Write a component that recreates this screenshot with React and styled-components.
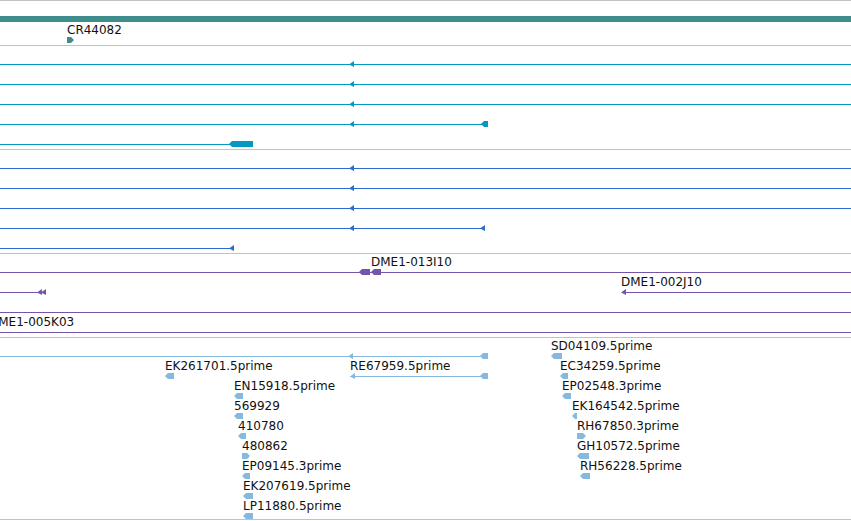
import React from "react";
import styled, { createGlobalStyle } from "styled-components";

const GlobalStyle = createGlobalStyle`
  html, body { margin: 0; padding: 0; background: #ffffff; overflow: hidden; }
  #root { width: 851px; }
`;

const Browser = styled.div`
  width: 851px;
  border-top: 1px solid #c2c2c2;
  background: #ffffff;
`;

const Track = styled.div`
  position: relative;
  height: ${(p) => p.$h}px;
  border-bottom: 1px solid #c2c2c2;
  overflow: hidden;
  color: ${(p) => p.$color};
`;

const Feature = styled.div.attrs((p) => ({
  style: { left: `${p.$x}px`, top: `${p.$top}px`, width: `${p.$w}px` },
}))`
  position: absolute;
  display: flex;
  flex-direction: column;
  align-items: flex-start;
`;

const Label = styled.div`
  height: 14px;
  line-height: 16px;
  font-family: "DejaVu Sans", "Liberation Sans", sans-serif;
  font-size: 12px;
  color: #111111;
  white-space: nowrap;
`;

const GlyphSvg = styled.svg`
  display: block;
  margin-top: 1px;
  overflow: visible;
  fill: currentColor;
`;

const FULL_A = -12;
const FULL_B = 861;

function shape(p, x0, key) {
  if (p.t === "line") {
    return <rect key={key} x={p.a - x0} y={3} width={p.b - p.a} height={1} shapeRendering="crispEdges" />;
  }
  if (p.t === "arrow") {
    const a = p.x - x0;
    const pts =
      p.dir === "R"
        ? `${a + 5},3.5 ${a},0 ${a},6`
        : `${a},3.5 ${a + 5},0 ${a + 5},6`;
    return <polygon key={key} points={pts} />;
  }
  const a = p.a - x0;
  const b = p.b - x0;
  let pts;
  if (p.dir === "L") pts = `${a},3 ${a + 3},0 ${b},0 ${b},6 ${a + 3},6`;
  else if (p.dir === "R") pts = `${a},0 ${b - 3},0 ${b},3 ${b - 3},6 ${a},6`;
  else pts = `${a},0 ${b},0 ${b},6 ${a},6`;
  return <polygon key={key} points={pts} />;
}

function FeatureGlyph({ f }) {
  const xs = f.parts.flatMap((p) => (p.t === "arrow" ? [p.x, p.x + 5] : [p.a, p.b]));
  const x0 = Math.min(...xs);
  const x1 = Math.max(...xs);
  const w = x1 - x0;
  return (
    <Feature $x={x0} $top={f.y - 18} $w={w}>
      <Label>{f.label || ""}</Label>
      <GlyphSvg width={w} height={6} viewBox={`0 0 ${w} 6`}>
        {f.parts.map((p, i) => shape(p, x0, i))}
      </GlyphSvg>
    </Feature>
  );
}

const line = (a, b) => ({ t: "line", a, b });
const arrow = (x, dir = "L") => ({ t: "arrow", x, dir });
const box = (a, b, dir = "L") => ({ t: "box", a, b, dir });

const fullArrowRow = (y) => ({ y, parts: [line(FULL_A, FULL_B), arrow(349)] });

const tracks = [
  {
    id: "t1",
    h: 44,
    color: "#3f8d8d",
    features: [
      { y: 18, parts: [box(FULL_A, FULL_B, null)] },
      { y: 39, label: "CR44082", parts: [box(67, 74, "R")] },
    ],
  },
  {
    id: "t2",
    h: 103,
    color: "#0499c2",
    features: [
      fullArrowRow(18),
      fullArrowRow(38),
      fullArrowRow(58),
      { y: 78, parts: [line(FULL_A, 484), arrow(349), box(481, 488)] },
      { y: 98, parts: [line(FULL_A, 232), box(229, 253)] },
    ],
  },
  {
    id: "t3",
    h: 103,
    color: "#2b6cd0",
    features: [
      fullArrowRow(18),
      fullArrowRow(38),
      fullArrowRow(58),
      { y: 78, parts: [line(FULL_A, 484), arrow(349), arrow(480)] },
      { y: 98, parts: [line(FULL_A, 232), arrow(229)] },
    ],
  },
  {
    id: "t4",
    h: 83,
    color: "#7655a9",
    features: [
      { y: 18, parts: [line(FULL_A, FULL_B)] },
      { y: 18, parts: [box(359, 370)] },
      { y: 18, label: "DME1-013I10", parts: [box(371, 381)] },
      { y: 38, parts: [line(FULL_A, 45), arrow(37), arrow(41)] },
      { y: 38, label: "DME1-002J10", parts: [line(623, FULL_B), arrow(621)] },
      { y: 58, parts: [line(FULL_A, FULL_B)] },
      { y: 78, label: "DME1-005K03", parts: [line(-11, FULL_B)] },
    ],
  },
  {
    id: "t5",
    h: 181,
    color: "#85b9df",
    features: [
      { y: 18, parts: [line(FULL_A, 484), arrow(348), box(480, 488)] },
      { y: 18, label: "SD04109.5prime", parts: [box(551, 562)] },
      { y: 38, label: "EK261701.5prime", parts: [box(165, 174)] },
      { y: 38, label: "RE67959.5prime", parts: [line(350, 484), arrow(350), box(480, 488)] },
      { y: 38, label: "EC34259.5prime", parts: [box(560, 568)] },
      { y: 58, label: "EN15918.5prime", parts: [box(234, 243)] },
      { y: 58, label: "EP02548.3prime", parts: [box(562, 571)] },
      { y: 78, label: "569929", parts: [box(234, 243)] },
      { y: 78, label: "EK164542.5prime", parts: [box(572, 577)] },
      { y: 98, label: "410780", parts: [box(238, 246)] },
      { y: 98, label: "RH67850.3prime", parts: [box(577, 586, "R")] },
      { y: 118, label: "480862", parts: [box(242, 250, "R")] },
      { y: 118, label: "GH10572.5prime", parts: [box(577, 589)] },
      { y: 138, label: "EP09145.3prime", parts: [box(242, 250)] },
      { y: 138, label: "RH56228.5prime", parts: [box(580, 590)] },
      { y: 158, label: "EK207619.5prime", parts: [box(243, 253)] },
      { y: 178, label: "LP11880.5prime", parts: [box(243, 253)] },
    ],
  },
];

export default function App() {
  return (
    <>
      <GlobalStyle />
      <Browser>
        {tracks.map((t) => (
          <Track key={t.id} $h={t.h} $color={t.color}>
            {t.features.map((f, i) => (
              <FeatureGlyph key={i} f={f} />
            ))}
          </Track>
        ))}
      </Browser>
    </>
  );
}
